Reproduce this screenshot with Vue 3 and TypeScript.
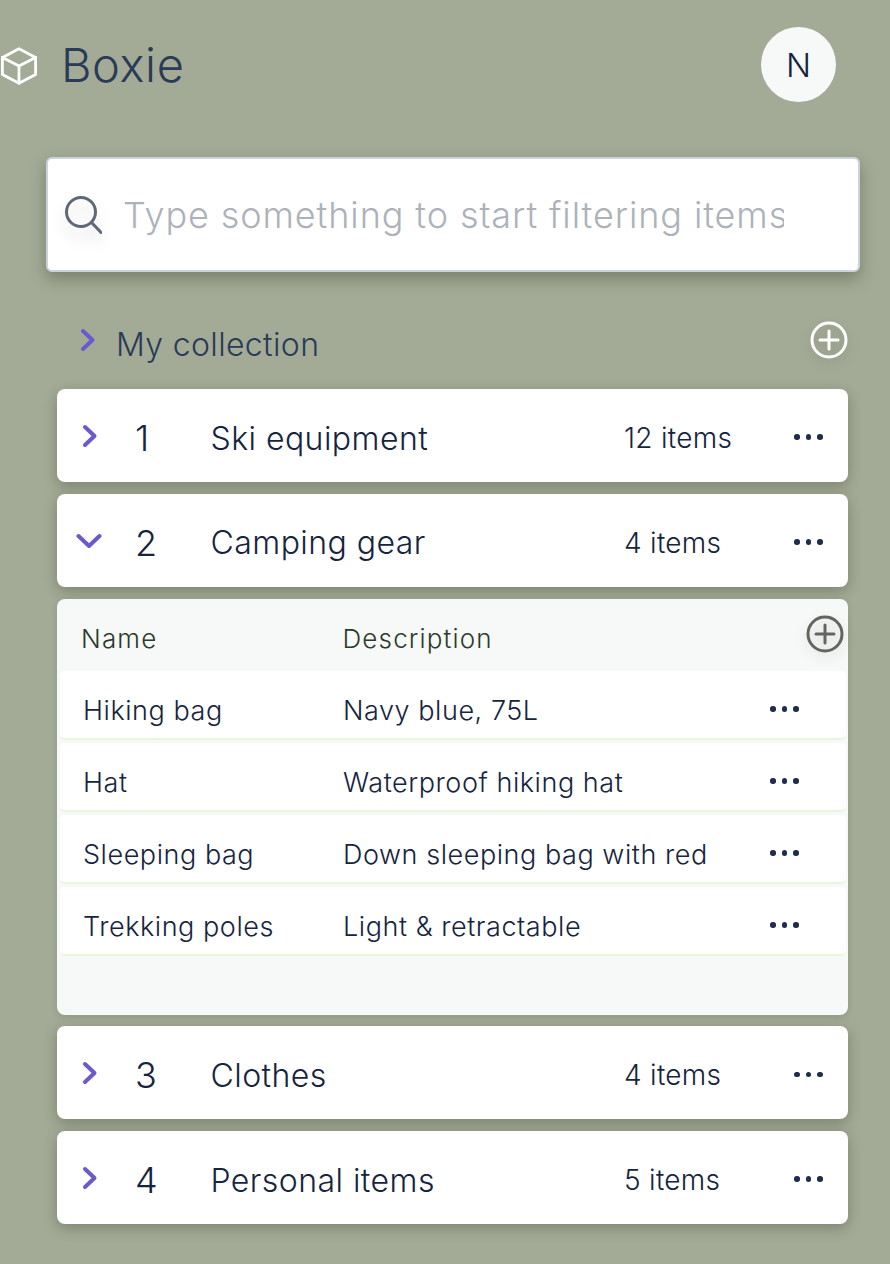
<script setup lang="ts">
interface Row {
  name: string;
  description: string;
}

interface Box {
  id: number;
  name: string;
  count: number;
  open: boolean;
}

const boxes: Box[] = [
  { id: 1, name: 'Ski equipment', count: 12, open: false },
  { id: 2, name: 'Camping gear', count: 4, open: true },
  { id: 3, name: 'Clothes', count: 4, open: false },
  { id: 4, name: 'Personal items', count: 5, open: false },
];

const rows: Row[] = [
  { name: 'Hiking bag', description: 'Navy blue, 75L' },
  { name: 'Hat', description: 'Waterproof hiking hat' },
  { name: 'Sleeping bag', description: 'Down sleeping bag with red' },
  { name: 'Trekking poles', description: 'Light & retractable' },
];
</script>

<template>
  <div class="page">
    <header class="header">
      <div class="brand">
        <svg class="logo" viewBox="0 0 38 38" fill="none" stroke="#fff" stroke-width="2.8" stroke-linejoin="round" stroke-linecap="round">
          <path d="M19 1.8 35.6 10.4V27.6L19 36.2 2.4 27.6V10.4Z" />
          <path d="M2.4 10.4 19 19 35.6 10.4M19 19V36.2" />
        </svg>
        <span class="brand-name">Boxie</span>
      </div>
      <div class="avatar">N</div>
    </header>

    <div class="search">
      <svg class="search-icon" viewBox="0 0 38 38" fill="none" stroke="#5f6877" stroke-width="3" stroke-linecap="round">
        <circle cx="17" cy="16" r="14.5" />
        <path d="M28 27 37 36.5" />
      </svg>
      <input class="search-input" type="text" placeholder="Type something to start filtering items" />
    </div>

    <div class="collection">
      <svg class="chevron chevron-title" viewBox="0 0 16 24" fill="none" stroke="#6a5acd" stroke-width="4" stroke-linecap="round" stroke-linejoin="round">
        <path d="M3 3 12.5 12 3 21" />
      </svg>
      <span class="collection-name">My collection</span>
      <svg class="plus plus-white" viewBox="0 0 38 38" fill="none" stroke-width="3" stroke-linecap="round">
        <circle cx="19" cy="19" r="17" />
        <path d="M19 10V28M10 19H28" />
      </svg>
    </div>

    <main class="boxes">
      <template v-for="box in boxes" :key="box.id">
        <section class="box">
          <svg v-if="box.open" class="chevron chevron-down" viewBox="0 0 26 16" fill="none" stroke="#6a5acd" stroke-width="4" stroke-linecap="round" stroke-linejoin="round">
            <path d="M2.5 3 13 13 23.5 3" />
          </svg>
          <svg v-else class="chevron chevron-right" viewBox="0 0 16 24" fill="none" stroke="#6a5acd" stroke-width="4" stroke-linecap="round" stroke-linejoin="round">
            <path d="M3 3 12.5 12 3 21" />
          </svg>
          <span class="box-id">{{ box.id }}</span>
          <span class="box-name">{{ box.name }}</span>
          <span class="box-count">{{ box.count }} items</span>
          <span class="dots"><i /><i /><i /></span>
        </section>

        <section v-if="box.open" class="panel">
          <div class="panel-head">
            <span>Name</span>
            <span>Description</span>
            <svg class="plus plus-grey" viewBox="0 0 38 38" fill="none" stroke-width="3" stroke-linecap="round">
              <circle cx="19" cy="19" r="17" />
              <path d="M19 10V28M10 19H28" />
            </svg>
          </div>
          <div v-for="row in rows" :key="row.name" class="row">
            <span>{{ row.name }}</span>
            <span>{{ row.description }}</span>
            <span class="dots"><i /><i /><i /></span>
          </div>
        </section>
      </template>
    </main>
  </div>
</template>

<style scoped>
.page {
  box-sizing: border-box;
  height: 1264px;
  overflow: hidden;
  background: #a3ab96;
  font-family: Inter, "Liberation Sans", sans-serif;
  color: #16243e;
  padding: 27px 30px 0 0;
}

.header {
  display: flex;
  justify-content: space-between;
  align-items: flex-start;
  height: 74px;
  padding-right: 24px;
}

.brand {
  display: flex;
  align-items: center;
  gap: 23px;
  height: 76px;
}

.logo {
  width: 38px;
  height: 38px;
  margin-top: 1px;
}

.brand-name {
  font-size: 47px;
  font-weight: 350;
  letter-spacing: 0.6px;
  line-height: 76px;
  color: #2a3b57;
}

.avatar {
  width: 75px;
  height: 75px;
  border-radius: 50%;
  background: #f7f9f9;
  display: flex;
  align-items: center;
  justify-content: center;
  font-size: 33px;
  font-weight: 350;
  color: #14233f;
}

.search {
  box-sizing: border-box;
  height: 115px;
  margin: 56px 0 0 46px;
  width: 814px;
  border: 2px solid #cbd2dc;
  border-radius: 6px;
  background: #fff;
  display: flex;
  align-items: center;
  padding: 0 74px 0 16px;
  box-shadow: 0 7px 16px rgba(40, 50, 30, 0.34);
}

.search-icon {
  flex: none;
  width: 38px;
  height: 38px;
  margin-right: 21px;
  filter: drop-shadow(0 10px 7px rgba(0, 0, 0, 0.14));
}

.search-input {
  flex: 1;
  min-width: 0;
  border: none;
  outline: none;
  padding: 0;
  background: transparent;
  font-family: inherit;
  font-size: 36px;
  font-weight: 350;
  letter-spacing: 0.9px;
}

.search-input::placeholder {
  color: #adb2ba;
  opacity: 1;
}

.collection {
  display: flex;
  align-items: center;
  height: 54px;
  margin: 45px 0 0 57px;
  width: 791px;
}

.chevron {
  width: 16px;
  height: 24px;
  justify-self: center;
}

.chevron-title {
  margin-left: 23px;
  margin-top: -8px;
}

.collection-name {
  margin-left: 20px;
  font-size: 32px;
  font-weight: 350;
  letter-spacing: 0.35px;
  color: #2a3b57;
}

.plus {
  width: 38px;
  height: 38px;
}

.plus-white {
  margin-left: auto;
  margin-top: -8px;
  stroke: #fff;
  filter: drop-shadow(0 5px 6px rgba(0, 0, 0, 0.13));
}

.plus-grey {
  position: absolute;
  top: 16px;
  right: 4px;
  stroke: #62665f;
  filter: drop-shadow(0 5px 6px rgba(0, 0, 0, 0.13));
}

.boxes {
  margin: 18px 0 0 57px;
  width: 791px;
  display: flex;
  flex-direction: column;
  gap: 11.8px;
}

.box {
  height: 93px;
  box-sizing: border-box;
  padding-top: 5px;
  border-radius: 8px;
  background: #fff;
  box-shadow: 0 4px 14px rgba(40, 50, 30, 0.32);
  display: grid;
  grid-template-columns: 64px 90px 413px 170px 1fr;
  align-items: center;
}

.chevron-right {
  margin-left: 2px;
}

.chevron-down {
  width: 26px;
  height: 16px;
}

.box > .chevron {
  margin-top: -4px;
}

.box-id {
  font-size: 36px;
  font-weight: 350;
  padding-left: 14px;
}

.box-name {
  font-size: 32px;
  font-weight: 350;
  letter-spacing: 0.45px;
  margin-left: -0.5px;
}

.box-count {
  font-size: 28px;
  font-weight: 350;
  letter-spacing: 0.3px;
}

.dots {
  display: flex;
  gap: 6px;
  margin-top: -2px;
}

.dots i {
  width: 5.5px;
  height: 5.5px;
  border-radius: 50%;
  background: #1f2d4b;
}

.panel {
  height: 416px;
  border-radius: 8px;
  background: #f7f9f8;
  box-shadow: 0 2px 6px rgba(40, 50, 30, 0.15);
  position: relative;
  box-sizing: border-box;
}

.panel-head {
  height: 72px;
  display: grid;
  grid-template-columns: 261.5px 1fr;
  align-items: center;
  padding: 8px 0 0 24px;
  box-sizing: border-box;
  font-size: 26px;
  font-weight: 350;
  letter-spacing: 1.15px;
  color: #2b3a2a;
}

.row {
  height: 69px;
  box-sizing: border-box;
  margin: 0 2px 3px 3px;
  background: #fff;
  border-bottom: 2px solid #e9f5dc;
  border-radius: 5px;
  display: grid;
  grid-template-columns: 260px 427px 1fr;
  align-items: center;
  padding: 13px 0 0 23px;
  font-size: 27px;
  font-weight: 350;
  letter-spacing: 0.55px;
}

.row .dots {
  margin-top: -3.5px;
}
</style>

<style>
html,
body {
  background: #a3ab96;
}
</style>
